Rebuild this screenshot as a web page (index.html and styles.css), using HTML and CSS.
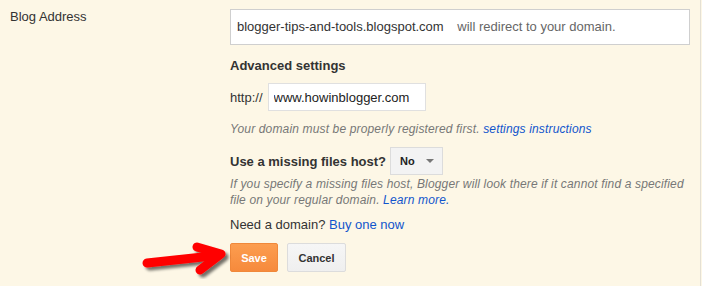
FILE: index.html
```html
<!DOCTYPE html>
<html lang="en-us">
  <head>
    <meta charset="utf-8">
    <title>Blog Address settings</title>
    <link rel="stylesheet" href="styles.css">
  </head>
  <body>
    <div class="panel">
      <div class="label">Blog Address</div>

      <div class="content">
        <div class="address">
          <span class="blogspot">blogger-tips-and-tools.blogspot.com</span>
          <span class="redirect">will redirect to your domain.</span>
        </div>

        <h2 class="heading">Advanced settings</h2>

        <div class="domainRow">
          <span>http://</span>
          <input type="text" class="domainField" value="www.howinblogger.com">
        </div>

        <p class="hint">Your domain must be properly registered first. <a href="#">settings instructions</a></p>

        <div class="hostRow">
          <span class="heading">Use a missing files host?</span>
          <span class="select">No <span class="caret"></span></span>
        </div>

        <p class="hint hostHint">If you specify a missing files host, Blogger will look there if it cannot find a specified file on your regular domain. <a href="#">Learn more.</a></p>

        <p class="buy">Need a domain? <a href="#">Buy one now</a></p>

        <div class="buttons">
          <button class="save">Save</button>
          <button class="cancel">Cancel</button>

          <!-- red arrow pointing at Save -->
          <svg class="arrow" width="96" height="40" viewBox="0 0 96 40">
            <defs>
              <filter id="shadow" x="-20%" y="-40%" width="140%" height="180%">
                <feGaussianBlur in="SourceAlpha" stdDeviation="1.6"/>
                <feOffset dx="3" dy="3" result="blur"/>
                <feComponentTransfer><feFuncA type="linear" slope="0.55"/></feComponentTransfer>
                <feMerge><feMergeNode/><feMergeNode in="SourceGraphic"/></feMerge>
              </filter>
            </defs>
            <g filter="url(#shadow)" fill="none" stroke="#f00" stroke-width="9" stroke-linecap="round" stroke-linejoin="round">
              <path d="M9 24 L74 17"/>
              <path d="M59 8 L83 15 L62 31"/>
            </g>
          </svg>
        </div>
      </div>
    </div>
  </body>
</html>
```

FILE: styles.css
```css
html {
  font-family: Arial, "Liberation Sans", sans-serif;
}

body {
  margin: 0;
  background-color: #fdf7e6;
  color: #333;
  font-size: 13px;
}

.panel {
  display: flex;
  width: 690px;
  height: 277px;
  padding: 9px 0 0 10px;
  border-right: 1px solid #e4e0d4;
}

.label {
  width: 220px;
  line-height: 16px;
}

.content {
  width: 460px;
}

.address {
  height: 34px;
  border: 1px solid #cfcfcf;
  background-color: #fff;
  padding: 0 7px 0 6px;
  line-height: 33px;
}

.redirect {
  color: #666;
  margin-left: 10px;
}

.heading {
  font-size: 13px;
  font-weight: bold;
  margin: 0;
}

h2.heading {
  margin-top: 13px;
  line-height: 16px;
}

.domainRow {
  display: flex;
  align-items: center;
  margin-top: 9px;
}

.domainRow span {
  margin-right: 5px;
}

.domainField {
  width: 146px;
  height: 26px;
  margin: 0;
  padding: 0 5px;
  border: 1px solid #e0e0e0;
  font-family: inherit;
  font-size: 13px;
  color: #222;
}

.hint {
  margin: 0;
  font-style: italic;
  color: #777;
  font-size: 12px;
  letter-spacing: 0.15px;
  line-height: 16px;
}

.domainRow + .hint {
  margin-top: 10px;
}

a {
  color: #15c;
  text-decoration: none;
}

.hostRow {
  display: flex;
  align-items: center;
  margin-top: 10px;
}

.select {
  display: inline-flex;
  align-items: center;
  margin-left: 4px;
  height: 26px;
  padding: 0 8px 0 9px;
  border: 1px solid #dcdcdc;
  background-color: #f3f3f3;
  font-weight: bold;
  font-size: 11px;
  color: #222;
}

.caret {
  width: 0;
  height: 0;
  margin-left: 11px;
  border-left: 4px solid transparent;
  border-right: 4px solid transparent;
  border-top: 4px solid #777;
}

.hostHint {
  margin-top: 1px;
}

.buy {
  margin: 9px 0 0;
  line-height: 16px;
}

.buttons {
  position: relative;
  display: flex;
  gap: 9px;
  margin-top: 10px;
}

.buttons button {
  height: 29px;
  padding: 0 10px;
  font-family: inherit;
  font-size: 11px;
  font-weight: bold;
  border-radius: 2px;
}

.save {
  width: 48px;
  color: #fff;
  border: 1px solid #f0883a;
  background-image: linear-gradient(to bottom, #fc9d4f 0%, #f68a3c 100%);
}

.cancel {
  width: 59px;
  color: #333;
  border: 1px solid #dcdcdc;
  background-image: linear-gradient(to bottom, #f6f6f6 0%, #efefef 100%);
}

.arrow {
  position: absolute;
  left: -92px;
  top: -4px;
}
```
